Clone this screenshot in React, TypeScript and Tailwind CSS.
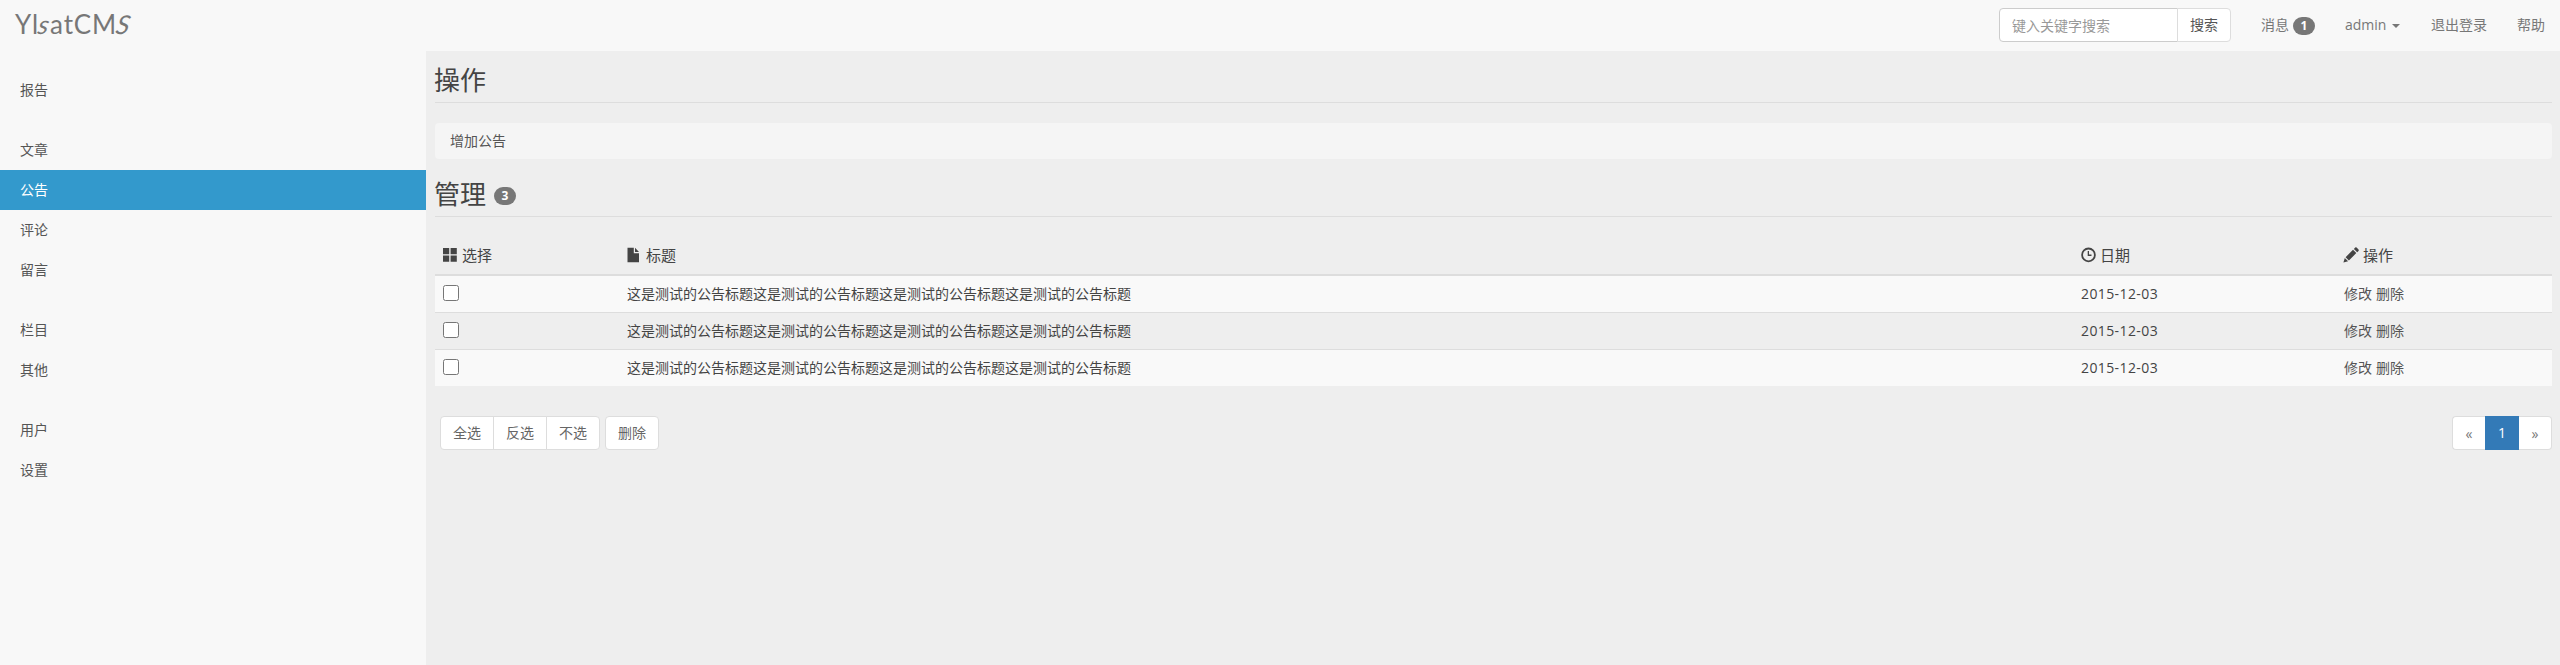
import type { ReactNode } from "react";

const groups: string[][] = [
  ["报告"],
  ["文章", "公告", "评论", "留言"],
  ["栏目", "其他"],
  ["用户", "设置"],
];
const active = "公告";

const rows = [1, 2, 3].map((id) => ({
  id,
  title: "这是测试的公告标题".repeat(4),
  date: "2015-12-03",
}));

const cols = "grid grid-cols-[184px_1454px_263px_216px]";

function Icon({ children }: { children: ReactNode }) {
  return (
    <svg viewBox="0 0 16 16" className="size-4 shrink-0" fill="#444">
      {children}
    </svg>
  );
}

function Logo() {
  return (
    <a className="flex items-baseline font-[Lato] text-[26px] leading-[48px] tracking-[0.8px] text-[#777]">
      <span>Yl</span>
      <span className="inline-block -skew-x-12 italic">s</span>
      <span>atCM</span>
      <span className="inline-block -skew-x-12 italic">S</span>
    </a>
  );
}

function Badge({ children }: { children: ReactNode }) {
  return (
    <span className="flex h-[18px] w-[22px] items-center justify-center rounded-[10px] bg-[#777] text-xs leading-none font-bold text-white">
      {children}
    </span>
  );
}

function Heading({ children }: { children: ReactNode }) {
  return (
    <h1 className="flex h-[45px] border-b border-[#ddd] text-[26px] leading-[44px] text-[#444]">
      {children}
    </h1>
  );
}

function HeadCell({ icon, label }: { icon: ReactNode; label: string }) {
  return (
    <div className="flex items-center gap-1 pb-px pl-[7px]">
      {icon}
      <span>{label}</span>
    </div>
  );
}

export default function App() {
  return (
    <div className="h-[665px] w-full overflow-hidden bg-[#eee] font-['Open_Sans','Noto_Sans_CJK_SC',sans-serif] text-sm leading-[19px] text-[#444]">
      <header className="flex h-[51px] items-start justify-between bg-[#f8f8f8] pl-[15px] text-[#777]">
        <Logo />
        <nav className="flex items-start">
          <div className="mt-2 mr-[30px] flex h-[34px]">
            <input
              placeholder="键入关键字搜索"
              className="h-[34px] w-[179px] rounded-l border border-[#ccc] bg-white px-3 placeholder:text-[#999]"
            />
            <button className="-ml-px w-[54px] rounded-r border border-[#ddd] bg-white pb-px text-[#555]">搜索</button>
          </div>
          <a className="mt-[15px] mr-[30px] flex h-[19px] gap-1">
            消息
            <span className="mt-0.5">
              <Badge>1</Badge>
            </span>
          </a>
          <a className="mt-[15px] mr-[29px] flex w-[57px] items-center">
            <span>admin</span>
            <span className="mt-0.5 ml-1.5 border-x-4 border-t-4 border-x-transparent border-t-[#777]" />
          </a>
          <a className="mt-[15px] mr-[30px]">退出登录</a>
          <a className="mt-[15px] mr-[15px]">帮助</a>
        </nav>
      </header>

      <div className="flex h-[614px]">
        <aside className="flex w-[426px] shrink-0 flex-col gap-5 bg-[#f8f8f8] pt-[19px]">
          {groups.map((items) => (
            <ul key={items[0]}>
              {items.map((item) => (
                <li
                  key={item}
                  className={
                    item === active
                      ? "h-10 bg-[#3399cc] pl-5 leading-[39px] text-white"
                      : "h-10 pl-5 leading-[39px] text-[#555]"
                  }
                >
                  {item}
                </li>
              ))}
            </ul>
          ))}
        </aside>

        <main className="ml-[9px] w-[2117px] pt-[7px]">
          <Heading>
            <span className="-ml-px">操作</span>
          </Heading>
          <div className="mt-5 h-9 rounded bg-[#f5f5f5] pl-[15px] leading-[35px] text-[#555]">增加公告</div>
          <div className="mt-[13px]">
            <Heading>
              <span className="-ml-px">管理</span>
              <span className="mt-[15px] ml-2">
                <Badge>3</Badge>
              </span>
            </Heading>
          </div>

          <div className="mt-5">
            <div className={`${cols} h-[39px] border-b-2 border-[#ddd] text-[15px] leading-5`}>
              <HeadCell
                label="选择"
                icon={
                  <Icon>
                    <path d="M1 1h6.2v6.2H1zM8.6 1h6.2v6.2H8.6zM1 8.6h6.2v6.2H1zM8.6 8.6h6.2v6.2H8.6z" />
                  </Icon>
                }
              />
              <HeadCell
                label="标题"
                icon={
                  <Icon>
                    <path d="M1.500.8h6.300v5.400h5.200v9H1.500zM9 .8 13 5H9z" />
                  </Icon>
                }
              />
              <HeadCell
                label="日期"
                icon={
                  <Icon>
                    <circle cx="8.500" cy="7.900" r="6.400" fill="none" stroke="#444" strokeWidth="1.800" />
                    <path d="M7.700 4H9v3.600h2.500v1.500H7.700z" />
                  </Icon>
                }
              />
              <HeadCell
                label="操作"
                icon={
                  <Icon>
                    <path d="M.4 15.600 1.800 11l3.300 3.300zM2.600 10.200 10 2.800l3.300 3.300-7.400 7.400zM10.900 1.900 12.200.6q.7-.6 1.400 0l1.900 1.900q.6.700 0 1.400L14.200 5.200z" />
                  </Icon>
                }
              />
            </div>
            {rows.map((row) => (
              <div
                key={row.id}
                className={`${cols} h-[37px] border-b border-[#ddd] leading-[35px] odd:bg-[#eee] even:bg-[#f9f9f9] last:h-9 last:border-b-0`}
              >
                <div className="pt-[9px] pl-2">
                  <input
                    type="checkbox"
                    className="block size-4 appearance-none rounded-[2.5px] border border-[#767676] bg-white"
                  />
                </div>
                <div className="pl-2">{row.title}</div>
                <div className="pl-2 tracking-[0.4px]">{row.date}</div>
                <div className="flex gap-1 pl-2 text-[#555]">
                  <a>修改</a>
                  <a>删除</a>
                </div>
              </div>
            ))}
          </div>

          <div className="mt-[30px] flex h-[34px] justify-between pl-[5px] text-[#666]">
            <div className="flex">
              <button className="w-[54px] rounded-l border border-[#ddd] bg-white pb-px">全选</button>
              <button className="-ml-px w-[54px] border border-[#ddd] bg-white pb-px">反选</button>
              <button className="-ml-px w-[54px] rounded-r border border-[#ddd] bg-white pb-px">不选</button>
              <button className="ml-[5px] w-[54px] rounded border border-[#ddd] bg-white pb-px">删除</button>
            </div>
            <div className="flex">
              <button className="w-[33px] rounded-l border border-r-0 border-[#ddd] bg-white text-[#777]">«</button>
              <button className="w-[34px] bg-[#337ab7] pb-px text-white">1</button>
              <button className="w-[33px] rounded-r border border-l-0 border-[#ddd] bg-white text-[#777]">»</button>
            </div>
          </div>
        </main>
      </div>
    </div>
  );
}
